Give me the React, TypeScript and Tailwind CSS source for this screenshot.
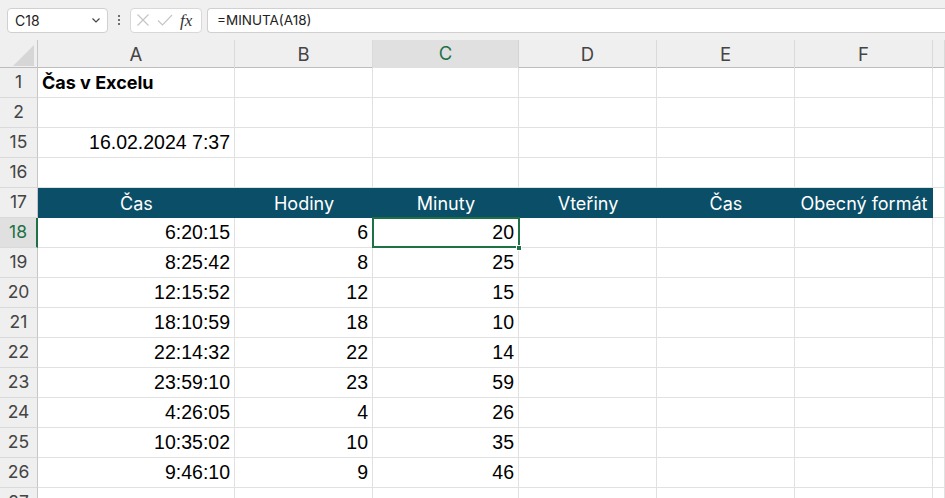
import React from 'react';

const cols = ['A', 'B', 'C', 'D', 'E', 'F', ''];

const data = [
  { row: 18, a: '6:20:15', b: '6', c: '20' },
  { row: 19, a: '8:25:42', b: '8', c: '25' },
  { row: 20, a: '12:15:52', b: '12', c: '15' },
  { row: 21, a: '18:10:59', b: '18', c: '10' },
  { row: 22, a: '22:14:32', b: '22', c: '14' },
  { row: 23, a: '23:59:10', b: '23', c: '59' },
  { row: 24, a: '4:26:05', b: '4', c: '26' },
  { row: 25, a: '10:35:02', b: '10', c: '35' },
  { row: 26, a: '9:46:10', b: '9', c: '46' },
];

const headers = ['Čas', 'Hodiny', 'Minuty', 'Vteřiny', 'Čas', 'Obecný formát'];

const gridCols = 'grid grid-cols-[38px_197px_138px_146px_138px_138px_138px_1fr]';
const ui = { fontFamily: 'Inter, "Noto Sans", sans-serif' };
const num = { fontFamily: '"Liberation Sans", Arial, sans-serif' };

function RowHead({ n, active }: { n: number | string; active?: boolean }) {
  return (
    <div
      className={
        'h-[30px] flex items-center justify-center text-[17.5px] border-b border-[#d9d9d9] ' +
        (active
          ? 'bg-[#e0e0e0] text-[#1e7145] border-r-2 border-r-[#1e7145]'
          : 'bg-[#efefef] text-[#444] border-r border-r-[#c6c6c6]')
      }
      style={ui}
    >
      {n}
    </div>
  );
}

function Cell({ children, align = 'right', bold }: { children?: React.ReactNode; align?: 'right' | 'left'; bold?: boolean }) {
  return (
    <div
      className={
        'h-[30px] border-r border-b border-[#e1e1e1] bg-white flex items-center px-[4px] text-black whitespace-nowrap overflow-visible ' +
        (align === 'right' ? 'justify-end text-[19.5px]' : 'justify-start text-[18px]') +
        (bold ? ' font-bold' : '')
      }
      style={bold ? ui : num}
    >
      {children}
    </div>
  );
}

function EmptyRow({ n }: { n: number }) {
  return (
    <>
      <RowHead n={n} />
      {cols.map((c, i) => (
        <Cell key={i} />
      ))}
    </>
  );
}

export default function App() {
  return (
    <div className="w-[945px] h-[498px] overflow-hidden bg-white relative">
      {/* Formula bar */}
      <div className="h-[40px] bg-[#f0f0f0] flex items-center pl-[7px]" style={ui}>
        <div className="w-[101px] h-[25px] bg-white border border-[#d0d0d0] rounded-[4px] flex items-center justify-between pl-[7px] pr-[5px]">
          <span className="text-[14px] text-[#222]">C18</span>
          <svg width="12" height="12" viewBox="0 0 12 12">
            <path d="M2.5 4.5 L6 8 L9.5 4.5" fill="none" stroke="#444" strokeWidth="1.2" />
          </svg>
        </div>
        <div className="w-[22px] flex flex-col items-center gap-[2px]">
          <span className="w-[2px] h-[2px] bg-[#444] rounded-full" />
          <span className="w-[2px] h-[2px] bg-[#444] rounded-full" />
          <span className="w-[2px] h-[2px] bg-[#444] rounded-full" />
        </div>
        <div className="w-[72px] h-[25px] bg-white border border-[#d8d8d8] rounded-[4px] flex items-center pl-[5px] gap-[7px]">
          <svg width="14" height="14" viewBox="0 0 14 14">
            <path d="M1.5 1.5 L12.5 12.5 M12.5 1.5 L1.5 12.5" stroke="#c4c4c4" strokeWidth="1.1" />
          </svg>
          <svg width="16" height="14" viewBox="0 0 16 14">
            <path d="M1 7.5 L5.5 12 L15 2" fill="none" stroke="#c4c4c4" strokeWidth="1.1" />
          </svg>
          <span className="text-[17px] italic text-[#333] leading-none" style={{ fontFamily: '"Liberation Serif", serif' }}>
            fx
          </span>
        </div>
        <div className="ml-[5px] flex-1 h-[25px] bg-white border border-r-0 border-[#d0d0d0] rounded-l-[4px] flex items-center pl-[9px]">
          <span className="text-[13.5px] text-[#222]">=MINUTA(A18)</span>
        </div>
      </div>

      {/* Column headers */}
      <div className={gridCols + ' h-[28px] bg-[#efefef] border-b border-[#bdbdbd]'} style={ui}>
        <div className="border-r border-[#c6c6c6] flex items-end justify-end pr-[3px] pb-[3px]">
          <svg width="21" height="21" viewBox="0 0 21 21">
            <polygon points="21,0 21,21 0,21" fill="#d6d6d6" />
          </svg>
        </div>
        {cols.map((c, i) =>
          c === 'C' ? (
            <div key={i} className="bg-[#e0e0e0] border-b-2 border-[#1e7145] border-r border-r-[#d4d4d4] flex items-center justify-center text-[18.5px] text-[#1e7145] -mb-[1px]">
              {c}
            </div>
          ) : (
            <div key={i} className="border-r border-[#dadada] flex items-center justify-center text-[18.5px] text-[#444]">
              {c}
            </div>
          )
        )}
      </div>

      {/* Sheet */}
      <div className={gridCols}>
        <RowHead n={1} />
        <Cell align="left" bold>
          Čas v Excelu
        </Cell>
        {cols.slice(1).map((c, i) => (
          <Cell key={i} />
        ))}

        <EmptyRow n={2} />

        <RowHead n={15} />
        <Cell>16.02.2024 7:37</Cell>
        {cols.slice(1).map((c, i) => (
          <Cell key={i} />
        ))}

        <EmptyRow n={16} />

        <RowHead n={17} />
        {headers.map((h, i) => (
          <div
            key={i}
            className="h-[30px] bg-[#0a4e68] text-white text-[18px] flex items-center justify-center whitespace-nowrap"
            style={ui}
          >
            {h}
          </div>
        ))}
        <Cell />

        {data.map((d) => (
          <React.Fragment key={d.row}>
            <RowHead n={d.row} active={d.row === 18} />
            <Cell>{d.a}</Cell>
            <Cell>{d.b}</Cell>
            {d.row === 18 ? (
              <div className="relative">
                <Cell>{d.c}</Cell>
                <div className="absolute -left-[1px] -top-[1px] w-[148px] h-[31px] border-2 border-[#1e7145] pointer-events-none" />
                <div className="absolute -right-[3px] -bottom-[3px] w-[6px] h-[6px] bg-[#1e7145] border border-white" />
              </div>
            ) : (
              <Cell>{d.c}</Cell>
            )}
            <Cell />
            <Cell />
            <Cell />
            <Cell />
          </React.Fragment>
        ))}

        <EmptyRow n={27} />
      </div>
    </div>
  );
}
